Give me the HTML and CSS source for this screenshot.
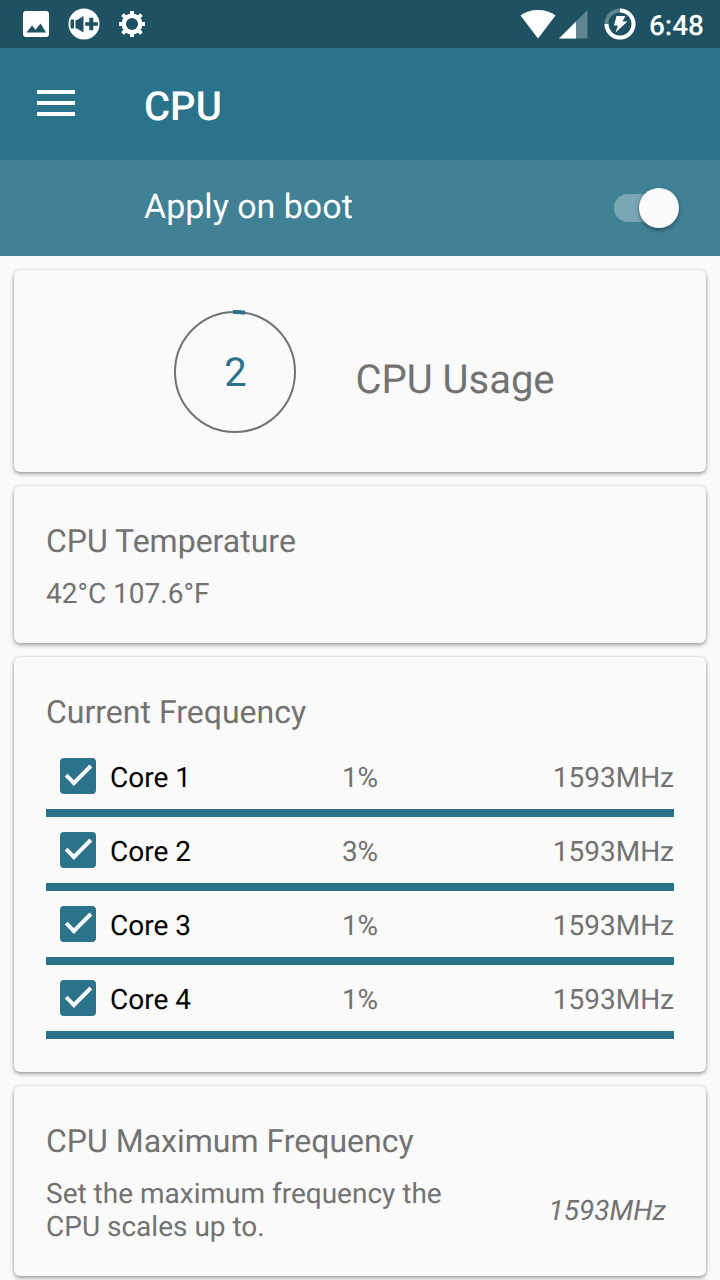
FILE: index.html
```html
<!DOCTYPE html>
<html lang="en">
<head>
    <meta charset="UTF-8">
    <meta name="viewport" content="width=device-width, initial-scale=1.0">
    <title>CPU</title>
    <link rel="stylesheet" href="styles.css">
</head>
<body>
    <div class="status-bar">
        <div class="status-icons">
            <svg width="28" height="32" viewBox="0 0 28 32" aria-hidden="true">
                <rect x="1" y="3" width="26" height="26" rx="3" fill="#fff"/>
                <path d="M4.500 24.500 10 17.500l3.500 4.200L18.500 15.500 24 24.500z" fill="#1e5161"/>
            </svg>
            <svg width="32" height="32" viewBox="0 0 32 32" aria-hidden="true">
                <circle cx="16" cy="16" r="15.500" fill="#fff"/>
                <g fill="#1e5161">
                    <rect x="2.500" y="11.500" width="3.500" height="9" rx="1"/>
                    <path d="M7.500 12H9l6.500-4v16.500L9 20.500H7.500z"/>
                    <path d="M21.500 10h3.500v4.500h4.500v3H25V22h-3.500v-4.500H17.500v-3h4z" stroke="#1e5161" stroke-width=".6" stroke-linejoin="round"/>
                </g>
            </svg>
            <svg width="32" height="32" viewBox="0 0 32 32" aria-hidden="true">
                <g fill="#fff">
                    <rect x="14" y="3" width="4" height="26"/>
                    <rect x="3" y="14" width="26" height="4"/>
                    <rect x="14" y="2.500" width="4" height="27" rx="1" transform="rotate(45 16 16)"/>
                    <rect x="14" y="2.500" width="4" height="27" rx="1" transform="rotate(-45 16 16)"/>
                    <circle cx="16" cy="16" r="10.500"/>
                </g>
                <circle cx="16" cy="16" r="6" fill="#1e5161"/>
            </svg>
        </div>
        <div class="status-icons status-right">
            <svg class="signal" width="68" height="32" viewBox="0 0 68 32" aria-hidden="true">
                <path d="M18 30.500 .5 7.500C5 4 11 2 18 2s13 2 17.500 5.500z" fill="#fff"/>
                <path d="M67.500 2v28.500H39z" fill="#fff" opacity=".3"/>
                <path d="M56 13.500v17H39z" fill="#fff"/>
            </svg>
            <svg width="32" height="32" viewBox="0 0 32 32" aria-hidden="true">
                <circle cx="16" cy="16" r="13.500" fill="none" stroke="#fff" stroke-width="4" opacity=".3"/>
                <path d="M16 2.500A13.500 13.500 0 1 1 2.500 16" fill="none" stroke="#fff" stroke-width="4"/>
                <path d="M12.500 8h9l-3 5.500H23.500L11.500 24.500l2.500-7H10z" fill="#fff"/>
            </svg>
            <span class="clock">6:48</span>
        </div>
    </div>

    <header class="app-bar">
        <button class="menu-button" type="button" aria-label="Open menu">
            <svg width="38" height="26" viewBox="0 0 38 26" aria-hidden="true">
                <path d="M0 2h38M0 13h38M0 24h38" stroke="#fff" stroke-width="4"/>
            </svg>
        </button>
        <h1 class="title">CPU</h1>
    </header>

    <div class="boot-bar">
        <label for="boot">Apply on boot</label>
        <input class="switch" type="checkbox" id="boot" role="switch" checked>
    </div>

    <main class="cards">
        <section class="card usage">
            <div class="gauge">
                <svg width="124" height="124" viewBox="0 0 124 124" aria-hidden="true">
                    <circle cx="62" cy="62" r="60" fill="none" stroke="#727272" stroke-width="2"/>
                    <path d="M60 2Q66 1.800 72 2.700" fill="none" stroke="#2a738a" stroke-width="4"/>
                </svg>
                <span class="gauge-value">2</span>
            </div>
            <h2 class="usage-label">CPU Usage</h2>
        </section>

        <section class="card">
            <h2>CPU Temperature</h2>
            <p>42°C 107.6°F</p>
        </section>

        <section class="card frequency">
            <h2>Current Frequency</h2>
            <div class="core">
                <label><input type="checkbox" checked><span>Core 1</span></label>
                <span>1%</span>
                <span class="mhz">1593MHz</span>
                <progress value="1593" max="1593" aria-label="Core 1 frequency"></progress>
            </div>
            <div class="core">
                <label><input type="checkbox" checked><span>Core 2</span></label>
                <span>3%</span>
                <span class="mhz">1593MHz</span>
                <progress value="1593" max="1593" aria-label="Core 2 frequency"></progress>
            </div>
            <div class="core">
                <label><input type="checkbox" checked><span>Core 3</span></label>
                <span>1%</span>
                <span class="mhz">1593MHz</span>
                <progress value="1593" max="1593" aria-label="Core 3 frequency"></progress>
            </div>
            <div class="core">
                <label><input type="checkbox" checked><span>Core 4</span></label>
                <span>1%</span>
                <span class="mhz">1593MHz</span>
                <progress value="1593" max="1593" aria-label="Core 4 frequency"></progress>
            </div>
        </section>

        <section class="card">
            <h2>CPU Maximum Frequency</h2>
            <div class="setting">
                <p>Set the maximum frequency the CPU scales up to.</p>
                <span class="setting-value">1593MHz</span>
            </div>
        </section>
    </main>
</body>
</html>
```
FILE: styles.css
```css
*,
*::before,
*::after {
    margin: 0;
    padding: 0;
    box-sizing: border-box;
}

body {
    font-family: Roboto, "Liberation Sans", sans-serif;
    font-size: 28px;
    line-height: 33px;
    text-rendering: geometricPrecision;
    color: #727272;
    background: #fafafa;
}

svg {
    display: block;
}

.status-bar {
    height: 48px;
    padding: 0 16px 0 22px;
    display: flex;
    justify-content: space-between;
    align-items: center;
    background: #1e5161;
    color: #fff;
}

.status-icons {
    display: flex;
    align-items: center;
    gap: 16px;
}

.status-icons > :first-child {
    margin-right: 2px;
}

.status-right {
    gap: 13px;
}

.status-right > :first-child {
    margin-right: 3px;
}

.clock {
    font-weight: 500;
    padding-top: 2px;
}

.app-bar {
    height: 112px;
    padding: 0 37px;
    display: flex;
    align-items: center;
    gap: 69px;
    background: #2a738a;
    color: #fff;
}

.menu-button {
    padding-bottom: 2px;
    background: none;
    border: none;
    cursor: pointer;
}

.title {
    font-size: 40px;
    line-height: 47px;
    font-weight: 500;
    padding-top: 4px;
}

.boot-bar {
    height: 96px;
    padding: 0 41px 0 144px;
    display: flex;
    justify-content: space-between;
    align-items: center;
    background: #408195;
    color: #fff;
    font-size: 34px;
    line-height: 40px;
}

.boot-bar label {
    padding-bottom: 2px;
}

.switch {
    appearance: none;
    position: relative;
    width: 65px;
    height: 40px;
    cursor: pointer;
}

.switch::before {
    content: "";
    position: absolute;
    top: 6px;
    left: 0;
    width: 56px;
    height: 28px;
    border-radius: 14px;
    background: rgba(255, 255, 255, 0.3);
}

.switch::after {
    content: "";
    position: absolute;
    top: 0;
    right: 0;
    width: 40px;
    height: 40px;
    border-radius: 50%;
    background: #fafafa;
    box-shadow: 0 2px 4px rgba(0, 0, 0, 0.4);
}

.cards {
    padding: 14px 14px 4px;
    display: flex;
    flex-direction: column;
    gap: 14px;
}

.card {
    padding: 36px 32px 33px;
    background: #fafafa;
    border-radius: 6px;
    box-shadow: 0 2px 4px rgba(0, 0, 0, 0.36), 0 0 2px rgba(0, 0, 0, 0.15);
}

.card h2 {
    font-size: 32px;
    line-height: 38px;
    font-weight: 400;
    margin-bottom: 17px;
}

.usage {
    padding: 40px 32px 38px 40px;
    display: flex;
    justify-content: center;
    align-items: center;
    gap: 58px;
}

.gauge {
    display: grid;
    place-items: center;
}

.gauge > * {
    grid-area: 1 / 1;
}

.gauge-value {
    font-size: 40px;
    line-height: 47px;
    color: #2a738a;
}

.card .usage-label {
    font-size: 40px;
    line-height: 47px;
    margin: 0;
    padding-top: 15px;
}

.card.frequency h2 {
    margin-bottom: 12px;
}

.core {
    display: grid;
    grid-template-columns: 1fr auto 1fr;
    grid-template-rows: 66px 8px;
    align-items: center;
}

.core label {
    display: flex;
    align-items: center;
    gap: 14px;
    padding-left: 14px;
    color: #000;
}

.core span {
    padding-top: 2px;
}

.core input {
    appearance: none;
    width: 36px;
    height: 36px;
    border-radius: 4px;
    background: #2a738a;
    position: relative;
}

.core input:checked::after {
    content: "";
    position: absolute;
    left: 12px;
    top: 1px;
    width: 13px;
    height: 26px;
    border: solid #fafafa;
    border-width: 0 4px 4px 0;
    transform: rotate(45deg);
}

.mhz {
    text-align: right;
}

progress {
    appearance: none;
    grid-column: 1 / -1;
    width: 100%;
    height: 8px;
    border: none;
}

progress::-webkit-progress-bar {
    background: #cfdfe4;
}

progress::-webkit-progress-value {
    background: #2a738a;
}

.setting {
    display: flex;
    justify-content: space-between;
    align-items: center;
    gap: 64px;
    padding-right: 8px;
}

.setting-value {
    font-style: italic;
}
```
